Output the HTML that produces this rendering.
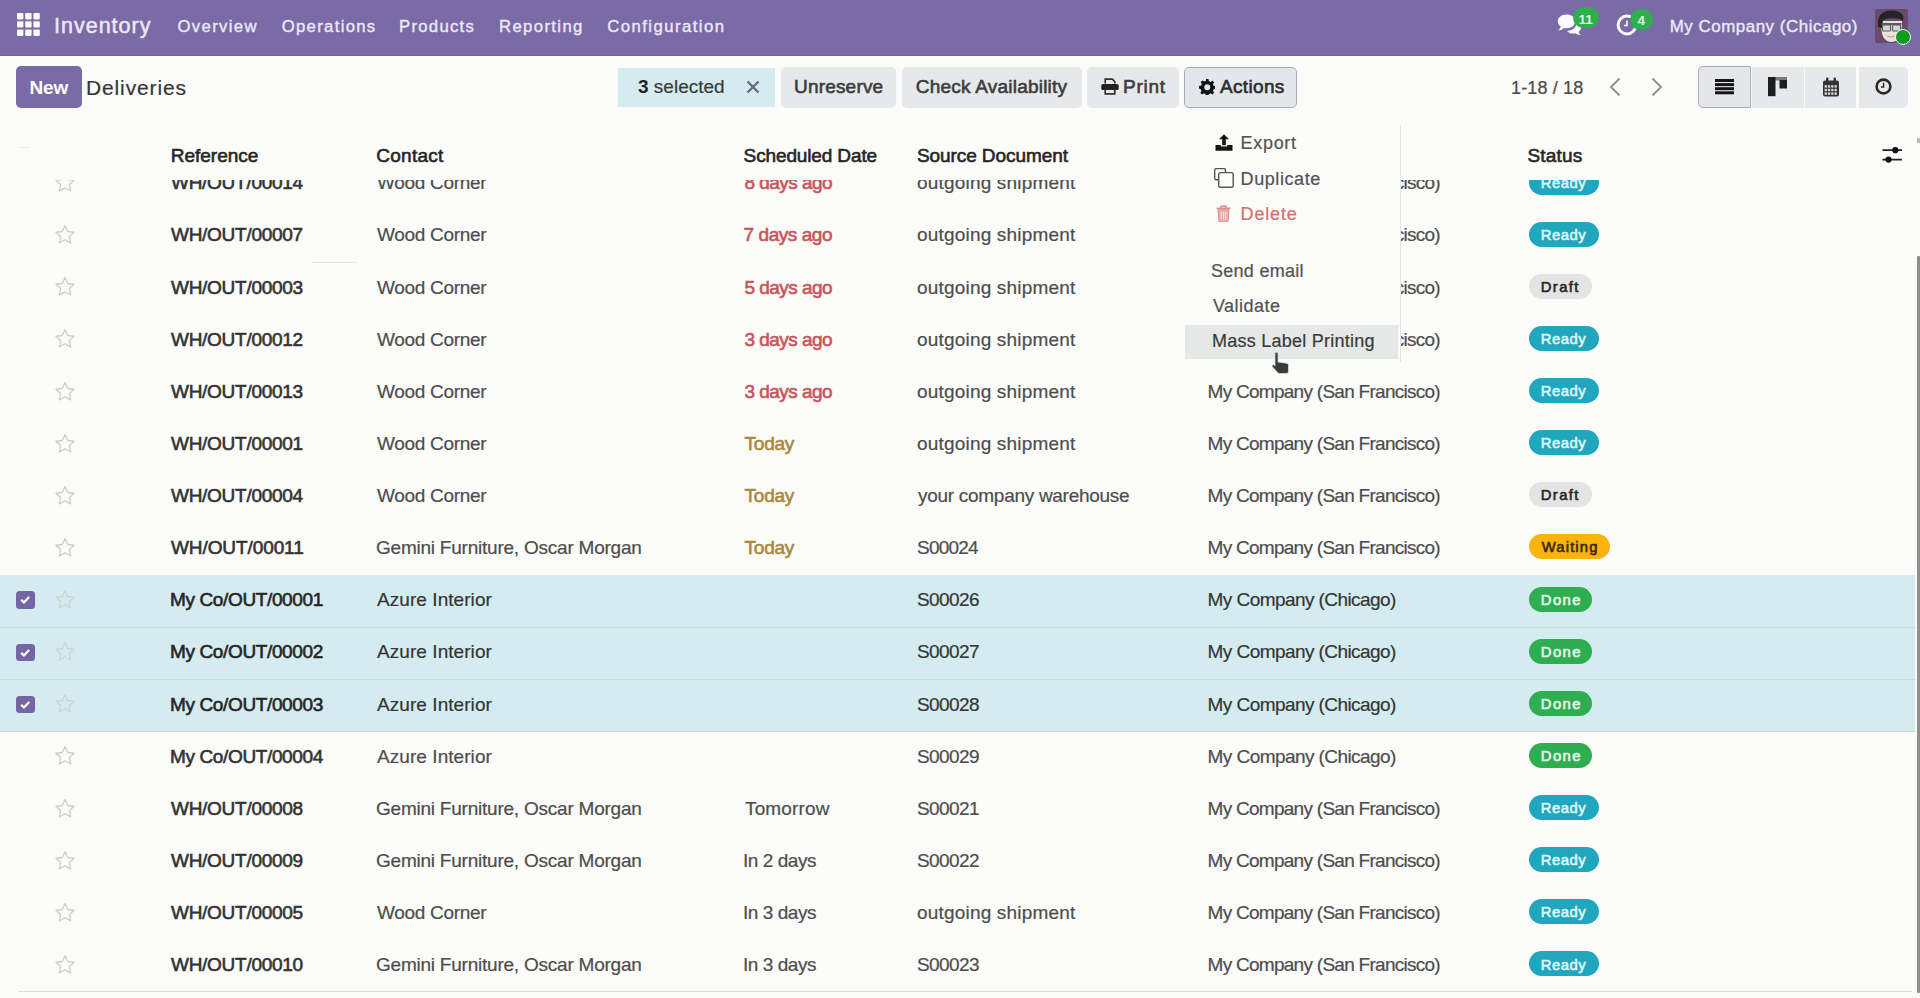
<!DOCTYPE html>
<html><head><meta charset="utf-8"><title>Deliveries - Inventory</title>
<style>
html,body{margin:0;padding:0;}
body{width:1920px;height:998px;position:relative;overflow:hidden;background:#fbfbf9;font-family:"Liberation Sans", sans-serif;}
.t{position:absolute;white-space:nowrap;line-height:24px;}
.t b{font-weight:700}
</style></head><body>
<div style="position:absolute;left:0.00px;top:0.00px;width:1920.00px;height:55.50px;z-index:20;background:#7a6aa6;border-bottom:1px solid #6f6095;box-sizing:border-box"></div>
<div style="position:absolute;left:17.30px;top:13.10px;width:23.70px;height:23.90px;z-index:21;"><svg width="24" height="24" style="display:block"><rect x="0.0" y="0.0" width="6.4" height="6.4" rx="0.8" fill="#fbfaff"/><rect x="8.2" y="0.0" width="6.4" height="6.4" rx="0.8" fill="#fbfaff"/><rect x="16.4" y="0.0" width="6.4" height="6.4" rx="0.8" fill="#fbfaff"/><rect x="0.0" y="8.2" width="6.4" height="6.4" rx="0.8" fill="#fbfaff"/><rect x="8.2" y="8.2" width="6.4" height="6.4" rx="0.8" fill="#fbfaff"/><rect x="16.4" y="8.2" width="6.4" height="6.4" rx="0.8" fill="#fbfaff"/><rect x="0.0" y="16.5" width="6.4" height="6.4" rx="0.8" fill="#fbfaff"/><rect x="8.2" y="16.5" width="6.4" height="6.4" rx="0.8" fill="#fbfaff"/><rect x="16.4" y="16.5" width="6.4" height="6.4" rx="0.8" fill="#fbfaff"/></svg></div>
<div style="position:absolute;left:1556.50px;top:13.50px;width:26.50px;height:24.00px;z-index:21;"><svg width="26" height="24" viewBox="0 0 26 24" style="display:block"><path d="M9.5 0.5C4.5 0.5 0.8 3.4 0.8 7.2c0 2.1 1.1 3.9 3 5.2-.3 1.5-1.2 2.8-2.6 3.9 2.4-.1 4.4-1.1 5.8-2.4.8.2 1.6.3 2.5.3 5 0 8.7-3 8.7-7S14.5.5 9.5.5z" fill="#fbfaff"/><path d="M19.5 9.2c-.2 4.3-4.4 7.5-9.6 7.7 1.4 1.6 3.9 2.6 6.6 2.6.8 0 1.5-.1 2.2-.3 1.3 1.1 3 1.8 5 1.9-1.1-.9-1.8-2-2.1-3.2 1.6-1.1 2.6-2.6 2.6-4.3 0-1.8-1.1-3.4-2.7-4.4z" fill="#fbfaff"/></svg></div>
<div style="position:absolute;left:1573.00px;top:7.30px;width:26.40px;height:21.20px;z-index:21;background:#2fae4e;border-radius:11px"></div>
<div style="position:absolute;left:1615.50px;top:14.30px;width:22.00px;height:22.00px;z-index:21;"><svg width="22" height="22" viewBox="0 0 22 22" style="display:block"><circle cx="11" cy="11" r="8.9" fill="none" stroke="#fbfaff" stroke-width="3"/><path d="M11 6.5v5h-3" fill="none" stroke="#fbfaff" stroke-width="1.6"/></svg></div>
<div style="position:absolute;left:1630.20px;top:8.70px;width:22.40px;height:20.90px;z-index:21;background:#2fae4e;border-radius:11px"></div>
<div style="position:absolute;left:1875.00px;top:8.60px;width:33.00px;height:34.00px;z-index:21;"><svg width="33" height="34" viewBox="0 0 33 34" style="display:block"><rect width="33" height="34" rx="2" fill="#6c4a6c"/><path d="M6 12 C6 26 8 32 16 33 C24 33 27 27 27 12z" fill="#ebe2df"/><path d="M3 17 C2 6 8 1 17 1.5 C25 1.5 30 5 28 12 L25 10 C19 8.5 12 9 8 11 L7 19 C5 19 3.5 18 3 17z" fill="#242424"/><rect x="6.5" y="14" width="20" height="2" fill="#5a5a5a"/><rect x="7.5" y="16" width="8" height="6" rx="1" fill="#d6d6d6" stroke="#5d5d5d" stroke-width="1.2"/><rect x="17.5" y="16" width="8" height="6" rx="1" fill="#d6d6d6" stroke="#5d5d5d" stroke-width="1.2"/><path d="M12 27 q4 2 8 0" fill="none" stroke="#b89a8c" stroke-width="1"/></svg></div>
<div style="position:absolute;left:1894.50px;top:28.50px;width:16.50px;height:16.50px;z-index:22;background:#0a9c1c;border-radius:50%;border:1.8px solid #f0fff0;box-sizing:border-box"></div>
<div style="position:absolute;left:16.00px;top:66.00px;width:66.00px;height:42.00px;z-index:6;background:#7a6aa6;border-radius:5px"></div>
<div style="position:absolute;left:618.00px;top:67.50px;width:157.00px;height:39.50px;z-index:6;background:#d4ecef"></div>
<div style="position:absolute;left:745.50px;top:80.00px;width:14.00px;height:14.00px;z-index:7;"><svg width="14" height="14" viewBox="0 0 14 14" style="display:block"><path d="M1.5 1.5L12.5 12.5M12.5 1.5L1.5 12.5" stroke="#6b6883" stroke-width="2.4"/></svg></div>
<div style="position:absolute;left:781.00px;top:67.00px;width:115.00px;height:40.60px;z-index:6;background:#e6e8e9;border-radius:5px"></div>
<div style="position:absolute;left:902.00px;top:67.00px;width:180.00px;height:40.60px;z-index:6;background:#e6e8e9;border-radius:5px"></div>
<div style="position:absolute;left:1087.00px;top:67.00px;width:92.00px;height:40.60px;z-index:6;background:#e6e8e9;border-radius:5px"></div>
<div style="position:absolute;left:1184.40px;top:66.60px;width:112.60px;height:41.40px;z-index:6;background:#e3e7ec;border:1.5px solid #a9aabd;border-radius:5px;box-sizing:border-box"></div>
<div style="position:absolute;left:1100.75px;top:78.40px;width:18.00px;height:17.00px;z-index:7;"><svg width="18" height="17" viewBox="0 0 18 17" style="display:block"><path d="M4.2 5.5V1.2h7.2l2.4 2.4v1.9" fill="none" stroke="#333" stroke-width="1.7"/><rect x="0.3" y="6" width="17.4" height="6" rx="1.6" fill="#222"/><path d="M4.2 11v4.8h9.6V11" fill="none" stroke="#333" stroke-width="1.7"/></svg></div>
<div style="position:absolute;left:1198.60px;top:78.80px;width:16.50px;height:16.50px;z-index:7;"><svg width="16.5" height="16.5" viewBox="0 0 24 24" style="display:block"><path fill="#111" fill-rule="evenodd" d="M10.2 0h3.6l.6 3.1c.9.3 1.7.6 2.4 1.1l2.7-1.8 2.5 2.5-1.8 2.7c.5.8.9 1.6 1.1 2.5l3.1.6v3.6l-3.1.6c-.3.9-.6 1.7-1.1 2.4l1.8 2.7-2.5 2.5-2.7-1.8c-.8.5-1.6.9-2.5 1.1l-.6 3.1h-3.6l-.6-3.1c-.9-.3-1.7-.6-2.4-1.1l-2.7 1.8-2.5-2.5 1.8-2.7c-.5-.8-.9-1.6-1.1-2.5L0 13.8v-3.6l3.1-.6c.3-.9.6-1.7 1.1-2.4L2.4 4.5 4.9 2l2.7 1.8c.8-.5 1.6-.9 2.5-1.1zM12 7.6a4.4 4.4 0 1 0 0 8.8 4.4 4.4 0 0 0 0-8.8z"/></svg></div>
<div style="position:absolute;left:1607.50px;top:77.30px;width:14.00px;height:20.00px;z-index:7;"><svg width="14" height="20" viewBox="0 0 14 20" style="display:block"><path d="M11.5 1.5L3 10l8.5 8.5" fill="none" stroke="#8f8f8f" stroke-width="1.8"/></svg></div>
<div style="position:absolute;left:1650.00px;top:77.30px;width:14.00px;height:20.00px;z-index:7;"><svg width="14" height="20" viewBox="0 0 14 20" style="display:block"><path d="M2.5 1.5L11 10l-8.5 8.5" fill="none" stroke="#8f8f8f" stroke-width="1.8"/></svg></div>
<div style="position:absolute;left:1698.00px;top:66.40px;width:52.50px;height:41.60px;z-index:6;background:#e4e6ea;border:1.5px solid #a9a9b8;border-radius:5px 0 0 5px;box-sizing:border-box"></div>
<div style="position:absolute;left:1752.00px;top:66.60px;width:51.70px;height:41.10px;z-index:6;background:#e6e8e9"></div>
<div style="position:absolute;left:1805.00px;top:66.60px;width:51.00px;height:41.10px;z-index:6;background:#e6e8e9"></div>
<div style="position:absolute;left:1858.60px;top:66.60px;width:49.80px;height:41.10px;z-index:6;background:#e6e8e9;border-radius:0 5px 5px 0"></div>
<div style="position:absolute;left:1715.30px;top:78.70px;width:19.00px;height:16.00px;z-index:7;"><svg width="19" height="16" style="display:block"><rect y="0" width="19" height="3" fill="#151515"/><rect y="4.1" width="19" height="3" fill="#151515"/><rect y="8.2" width="19" height="3" fill="#151515"/><rect y="12.3" width="19" height="3" fill="#151515"/></svg></div>
<div style="position:absolute;left:1768.40px;top:77.00px;width:19.00px;height:20.00px;z-index:7;"><svg width="19" height="20" style="display:block"><rect x="0" y="0" width="19" height="3.5" fill="#7a7a7a"/><rect x="0" y="0" width="7.5" height="19.2" fill="#1e1e1e"/><rect x="11.5" y="3" width="7.5" height="8.5" fill="#1e1e1e"/></svg></div>
<div style="position:absolute;left:1822.00px;top:76.50px;width:18.00px;height:20.00px;z-index:7;"><svg width="18" height="20" viewBox="0 0 18 20" style="display:block"><path d="M1 5.5a2 2 0 0 1 2-2h12a2 2 0 0 1 2 2V17.5a2 2 0 0 1-2 2H3a2 2 0 0 1-2-2z" fill="#333"/><rect x="4" y="0.5" width="2.4" height="5" rx="1" fill="#333"/><rect x="11.6" y="0.5" width="2.4" height="5" rx="1" fill="#333"/><rect x="2.6" y="8.2" width="2.3" height="2.4" fill="#d8dadc"/><rect x="5.9" y="8.2" width="2.3" height="2.4" fill="#d8dadc"/><rect x="9.2" y="8.2" width="2.3" height="2.4" fill="#d8dadc"/><rect x="12.5" y="8.2" width="2.3" height="2.4" fill="#d8dadc"/><rect x="2.6" y="11.8" width="2.3" height="2.4" fill="#d8dadc"/><rect x="5.9" y="11.8" width="2.3" height="2.4" fill="#d8dadc"/><rect x="9.2" y="11.8" width="2.3" height="2.4" fill="#d8dadc"/><rect x="12.5" y="11.8" width="2.3" height="2.4" fill="#d8dadc"/><rect x="2.6" y="15.4" width="2.3" height="2.4" fill="#d8dadc"/><rect x="5.9" y="15.4" width="2.3" height="2.4" fill="#d8dadc"/><rect x="9.2" y="15.4" width="2.3" height="2.4" fill="#d8dadc"/><rect x="12.5" y="15.4" width="2.3" height="2.4" fill="#d8dadc"/></svg></div>
<div style="position:absolute;left:1875.30px;top:78.30px;width:17.00px;height:17.00px;z-index:7;"><svg width="17" height="17" viewBox="0 0 17 17" style="display:block"><circle cx="8.5" cy="8.5" r="6.9" fill="none" stroke="#2a2a2a" stroke-width="2.6"/><path d="M8.6 4.8v4.2H6" fill="none" stroke="#2a2a2a" stroke-width="1.4"/></svg></div>
<div style="position:absolute;left:1881.50px;top:147.00px;width:22.00px;height:16.00px;z-index:6;"><svg width="22" height="16" viewBox="0 0 22 16" style="display:block"><path d="M0.5 3.2h19.5M0.5 12.6h19.5" stroke="#222" stroke-width="1.8"/><circle cx="13.3" cy="3.2" r="3.1" fill="#111"/><circle cx="6.5" cy="12.6" r="3.1" fill="#111"/></svg></div>
<div style="position:absolute;left:18.50px;top:146.50px;width:11.00px;height:1.00px;z-index:6;background:#ebebeb"></div>
<div style="position:absolute;left:0.00px;top:575.04px;width:1914.50px;height:52.13px;z-index:1;background:#d4ecef"></div>
<div style="position:absolute;left:0.00px;top:627.17px;width:1914.50px;height:52.13px;z-index:1;background:#d4ecef"></div>
<div style="position:absolute;left:0.00px;top:679.30px;width:1914.50px;height:52.13px;z-index:1;background:#d4ecef"></div>
<div style="position:absolute;left:0.00px;top:626.57px;width:1914.50px;height:1.50px;z-index:2;background:#cfd4d4"></div>
<div style="position:absolute;left:0.00px;top:678.70px;width:1914.50px;height:1.50px;z-index:2;background:#cfd4d4"></div>
<div style="position:absolute;left:0.00px;top:730.83px;width:1914.50px;height:1.50px;z-index:2;background:#cfd4d4"></div>
<div style="position:absolute;left:18.00px;top:991.00px;width:1894.00px;height:1.30px;z-index:2;background:#dddddd"></div>
<div style="position:absolute;left:311.80px;top:261.80px;width:45.20px;height:1.00px;z-index:2;background:#e6e6e6"></div>
<div style="position:absolute;left:54.00px;top:172.00px;width:22.00px;height:20.00px;z-index:3;"><svg width="22" height="20" viewBox="0 0 22 20" style="display:block"><path d="M11 1.6l2.75 5.9 6.35.75-4.7 4.35 1.25 6.3L11 15.75 5.35 18.9l1.25-6.3L1.9 8.25l6.35-.75z" fill="none" stroke="#cdcdcd" stroke-width="1.3" stroke-linejoin="round"/></svg></div>
<div style="position:absolute;left:1528.50px;top:169.50px;width:70.50px;height:25.00px;z-index:3;background:#20a7bd;border-radius:12.5px"></div>
<div style="position:absolute;left:54.00px;top:224.13px;width:22.00px;height:20.00px;z-index:3;"><svg width="22" height="20" viewBox="0 0 22 20" style="display:block"><path d="M11 1.6l2.75 5.9 6.35.75-4.7 4.35 1.25 6.3L11 15.75 5.35 18.9l1.25-6.3L1.9 8.25l6.35-.75z" fill="none" stroke="#cdcdcd" stroke-width="1.3" stroke-linejoin="round"/></svg></div>
<div style="position:absolute;left:1528.50px;top:221.63px;width:70.50px;height:25.00px;z-index:3;background:#20a7bd;border-radius:12.5px"></div>
<div style="position:absolute;left:54.00px;top:276.26px;width:22.00px;height:20.00px;z-index:3;"><svg width="22" height="20" viewBox="0 0 22 20" style="display:block"><path d="M11 1.6l2.75 5.9 6.35.75-4.7 4.35 1.25 6.3L11 15.75 5.35 18.9l1.25-6.3L1.9 8.25l6.35-.75z" fill="none" stroke="#cdcdcd" stroke-width="1.3" stroke-linejoin="round"/></svg></div>
<div style="position:absolute;left:1528.50px;top:273.76px;width:63.00px;height:25.00px;z-index:3;background:#e4e4e4;border-radius:12.5px"></div>
<div style="position:absolute;left:54.00px;top:328.39px;width:22.00px;height:20.00px;z-index:3;"><svg width="22" height="20" viewBox="0 0 22 20" style="display:block"><path d="M11 1.6l2.75 5.9 6.35.75-4.7 4.35 1.25 6.3L11 15.75 5.35 18.9l1.25-6.3L1.9 8.25l6.35-.75z" fill="none" stroke="#cdcdcd" stroke-width="1.3" stroke-linejoin="round"/></svg></div>
<div style="position:absolute;left:1528.50px;top:325.89px;width:70.50px;height:25.00px;z-index:3;background:#20a7bd;border-radius:12.5px"></div>
<div style="position:absolute;left:54.00px;top:380.52px;width:22.00px;height:20.00px;z-index:3;"><svg width="22" height="20" viewBox="0 0 22 20" style="display:block"><path d="M11 1.6l2.75 5.9 6.35.75-4.7 4.35 1.25 6.3L11 15.75 5.35 18.9l1.25-6.3L1.9 8.25l6.35-.75z" fill="none" stroke="#cdcdcd" stroke-width="1.3" stroke-linejoin="round"/></svg></div>
<div style="position:absolute;left:1528.50px;top:378.02px;width:70.50px;height:25.00px;z-index:3;background:#20a7bd;border-radius:12.5px"></div>
<div style="position:absolute;left:54.00px;top:432.65px;width:22.00px;height:20.00px;z-index:3;"><svg width="22" height="20" viewBox="0 0 22 20" style="display:block"><path d="M11 1.6l2.75 5.9 6.35.75-4.7 4.35 1.25 6.3L11 15.75 5.35 18.9l1.25-6.3L1.9 8.25l6.35-.75z" fill="none" stroke="#cdcdcd" stroke-width="1.3" stroke-linejoin="round"/></svg></div>
<div style="position:absolute;left:1528.50px;top:430.15px;width:70.50px;height:25.00px;z-index:3;background:#20a7bd;border-radius:12.5px"></div>
<div style="position:absolute;left:54.00px;top:484.78px;width:22.00px;height:20.00px;z-index:3;"><svg width="22" height="20" viewBox="0 0 22 20" style="display:block"><path d="M11 1.6l2.75 5.9 6.35.75-4.7 4.35 1.25 6.3L11 15.75 5.35 18.9l1.25-6.3L1.9 8.25l6.35-.75z" fill="none" stroke="#cdcdcd" stroke-width="1.3" stroke-linejoin="round"/></svg></div>
<div style="position:absolute;left:1528.50px;top:482.28px;width:63.00px;height:25.00px;z-index:3;background:#e4e4e4;border-radius:12.5px"></div>
<div style="position:absolute;left:54.00px;top:536.91px;width:22.00px;height:20.00px;z-index:3;"><svg width="22" height="20" viewBox="0 0 22 20" style="display:block"><path d="M11 1.6l2.75 5.9 6.35.75-4.7 4.35 1.25 6.3L11 15.75 5.35 18.9l1.25-6.3L1.9 8.25l6.35-.75z" fill="none" stroke="#cdcdcd" stroke-width="1.3" stroke-linejoin="round"/></svg></div>
<div style="position:absolute;left:1528.50px;top:534.41px;width:81.00px;height:25.00px;z-index:3;background:#fbb30d;border-radius:12.5px"></div>
<div style="position:absolute;left:54.00px;top:589.04px;width:22.00px;height:20.00px;z-index:3;"><svg width="22" height="20" viewBox="0 0 22 20" style="display:block"><path d="M11 1.6l2.75 5.9 6.35.75-4.7 4.35 1.25 6.3L11 15.75 5.35 18.9l1.25-6.3L1.9 8.25l6.35-.75z" fill="none" stroke="#d0d4d4" stroke-width="1.3" stroke-linejoin="round"/></svg></div>
<div style="position:absolute;left:16.00px;top:591.44px;width:18.50px;height:17.30px;z-index:3;background:#7466a5;border-radius:3.5px"><svg width="18.5" height="17.3" viewBox="0 0 18.5 17.3" style="display:block"><path d="M5.2 8.8l2.7 2.7 5.3-5.6" fill="none" stroke="#fff" stroke-width="2.2"/></svg></div>
<div style="position:absolute;left:1528.50px;top:586.54px;width:63.80px;height:25.00px;z-index:3;background:#2eae50;border-radius:12.5px"></div>
<div style="position:absolute;left:54.00px;top:641.17px;width:22.00px;height:20.00px;z-index:3;"><svg width="22" height="20" viewBox="0 0 22 20" style="display:block"><path d="M11 1.6l2.75 5.9 6.35.75-4.7 4.35 1.25 6.3L11 15.75 5.35 18.9l1.25-6.3L1.9 8.25l6.35-.75z" fill="none" stroke="#d0d4d4" stroke-width="1.3" stroke-linejoin="round"/></svg></div>
<div style="position:absolute;left:16.00px;top:643.57px;width:18.50px;height:17.30px;z-index:3;background:#7466a5;border-radius:3.5px"><svg width="18.5" height="17.3" viewBox="0 0 18.5 17.3" style="display:block"><path d="M5.2 8.8l2.7 2.7 5.3-5.6" fill="none" stroke="#fff" stroke-width="2.2"/></svg></div>
<div style="position:absolute;left:1528.50px;top:638.67px;width:63.80px;height:25.00px;z-index:3;background:#2eae50;border-radius:12.5px"></div>
<div style="position:absolute;left:54.00px;top:693.30px;width:22.00px;height:20.00px;z-index:3;"><svg width="22" height="20" viewBox="0 0 22 20" style="display:block"><path d="M11 1.6l2.75 5.9 6.35.75-4.7 4.35 1.25 6.3L11 15.75 5.35 18.9l1.25-6.3L1.9 8.25l6.35-.75z" fill="none" stroke="#d0d4d4" stroke-width="1.3" stroke-linejoin="round"/></svg></div>
<div style="position:absolute;left:16.00px;top:695.70px;width:18.50px;height:17.30px;z-index:3;background:#7466a5;border-radius:3.5px"><svg width="18.5" height="17.3" viewBox="0 0 18.5 17.3" style="display:block"><path d="M5.2 8.8l2.7 2.7 5.3-5.6" fill="none" stroke="#fff" stroke-width="2.2"/></svg></div>
<div style="position:absolute;left:1528.50px;top:690.80px;width:63.80px;height:25.00px;z-index:3;background:#2eae50;border-radius:12.5px"></div>
<div style="position:absolute;left:54.00px;top:745.43px;width:22.00px;height:20.00px;z-index:3;"><svg width="22" height="20" viewBox="0 0 22 20" style="display:block"><path d="M11 1.6l2.75 5.9 6.35.75-4.7 4.35 1.25 6.3L11 15.75 5.35 18.9l1.25-6.3L1.9 8.25l6.35-.75z" fill="none" stroke="#cdcdcd" stroke-width="1.3" stroke-linejoin="round"/></svg></div>
<div style="position:absolute;left:1528.50px;top:742.93px;width:63.80px;height:25.00px;z-index:3;background:#2eae50;border-radius:12.5px"></div>
<div style="position:absolute;left:54.00px;top:797.56px;width:22.00px;height:20.00px;z-index:3;"><svg width="22" height="20" viewBox="0 0 22 20" style="display:block"><path d="M11 1.6l2.75 5.9 6.35.75-4.7 4.35 1.25 6.3L11 15.75 5.35 18.9l1.25-6.3L1.9 8.25l6.35-.75z" fill="none" stroke="#cdcdcd" stroke-width="1.3" stroke-linejoin="round"/></svg></div>
<div style="position:absolute;left:1528.50px;top:795.06px;width:70.50px;height:25.00px;z-index:3;background:#20a7bd;border-radius:12.5px"></div>
<div style="position:absolute;left:54.00px;top:849.69px;width:22.00px;height:20.00px;z-index:3;"><svg width="22" height="20" viewBox="0 0 22 20" style="display:block"><path d="M11 1.6l2.75 5.9 6.35.75-4.7 4.35 1.25 6.3L11 15.75 5.35 18.9l1.25-6.3L1.9 8.25l6.35-.75z" fill="none" stroke="#cdcdcd" stroke-width="1.3" stroke-linejoin="round"/></svg></div>
<div style="position:absolute;left:1528.50px;top:847.19px;width:70.50px;height:25.00px;z-index:3;background:#20a7bd;border-radius:12.5px"></div>
<div style="position:absolute;left:54.00px;top:901.82px;width:22.00px;height:20.00px;z-index:3;"><svg width="22" height="20" viewBox="0 0 22 20" style="display:block"><path d="M11 1.6l2.75 5.9 6.35.75-4.7 4.35 1.25 6.3L11 15.75 5.35 18.9l1.25-6.3L1.9 8.25l6.35-.75z" fill="none" stroke="#cdcdcd" stroke-width="1.3" stroke-linejoin="round"/></svg></div>
<div style="position:absolute;left:1528.50px;top:899.32px;width:70.50px;height:25.00px;z-index:3;background:#20a7bd;border-radius:12.5px"></div>
<div style="position:absolute;left:54.00px;top:953.95px;width:22.00px;height:20.00px;z-index:3;"><svg width="22" height="20" viewBox="0 0 22 20" style="display:block"><path d="M11 1.6l2.75 5.9 6.35.75-4.7 4.35 1.25 6.3L11 15.75 5.35 18.9l1.25-6.3L1.9 8.25l6.35-.75z" fill="none" stroke="#cdcdcd" stroke-width="1.3" stroke-linejoin="round"/></svg></div>
<div style="position:absolute;left:1528.50px;top:951.45px;width:70.50px;height:25.00px;z-index:3;background:#20a7bd;border-radius:12.5px"></div>
<div style="position:absolute;left:0.00px;top:55.50px;width:1920.00px;height:124.50px;z-index:5;background:#fbfbf9"></div>
<div style="position:absolute;left:1185.00px;top:125.00px;width:215.80px;height:237.00px;z-index:10;background:#fbfbf9;border-right:1px solid #e4e4e4;box-sizing:border-box"></div>
<div style="position:absolute;left:1185.30px;top:325.00px;width:212.50px;height:33.80px;z-index:11;background:#e6e8e8"></div>
<div style="position:absolute;left:1215.00px;top:134.00px;width:18.00px;height:17.00px;z-index:12;"><svg width="18" height="17" viewBox="0 0 18 17" style="display:block"><path d="M9 0.3l5 5h-3.2v6H7.2v-6H4z" fill="#151515"/><path d="M0.5 11h5.3v1.5h6.4V11h5.3v5.8H0.5z" fill="#151515"/></svg></div>
<div style="position:absolute;left:1214.00px;top:168.30px;width:20.00px;height:20.00px;z-index:12;"><svg width="20" height="20" viewBox="0 0 20 20" style="display:block"><path d="M11.5 4.5V2.2a1.6 1.6 0 0 0-1.6-1.6H2.3A1.6 1.6 0 0 0 .7 2.2v8a1.6 1.6 0 0 0 1.6 1.6h2.2" fill="none" stroke="#555" stroke-width="1.4"/><rect x="4.7" y="4.6" width="14.5" height="14.6" rx="1.8" fill="none" stroke="#555" stroke-width="1.4"/></svg></div>
<div style="position:absolute;left:1216.30px;top:205.30px;width:15.00px;height:17.00px;z-index:12;"><svg width="15" height="17" viewBox="0 0 15 17" style="display:block"><path d="M0.5 3.3h14M5 3.3V1.2h5v2.1" fill="none" stroke="#e08d8d" stroke-width="1.5"/><path d="M2 4.2h11l-.9 11.8a1 1 0 0 1-1 .9H3.9a1 1 0 0 1-1-.9z" fill="#eab0b0" stroke="#e08d8d" stroke-width="1"/><path d="M5.3 7v7M7.5 7v7M9.7 7v7" stroke="#f6dede" stroke-width="1"/></svg></div>
<div style="position:absolute;left:1270.50px;top:350.50px;width:22.00px;height:26.00px;z-index:30;"><svg width="22" height="26" viewBox="0 0 22 26" style="display:block"><path d="M5.5 1.3c.9 0 1.5.6 1.5 1.5v8.2l8.3 1.2c1.5.3 2.2 1 2.2 2.4v5.6c0 1.4-.9 2.3-2.3 2.3H8.6c-.9 0-1.5-.4-2-1L1.4 15.8c-.6-.8-.3-1.7.6-2 .6-.2 1.3 0 1.8.5L4 15V2.8c0-.9.6-1.5 1.5-1.5z" fill="#3a3a3a" stroke="#d8dcdc" stroke-width="0.8"/></svg></div>
<div style="position:absolute;left:1917.20px;top:256.00px;width:2.80px;height:737.00px;z-index:30;background:#8e8e8e;border-radius:1px"></div>
<div style="position:absolute;left:1917.00px;top:138.00px;width:3.00px;height:5.00px;z-index:30;background:#bbbbbb"></div>
<div id="t0" class="t" style="left:54.00px;top:14.15px;font-size:21.5px;font-weight:400;color:#ece8f6;letter-spacing:1.000px;z-index:25;-webkit-text-stroke:0.5px #ece8f6">Inventory</div>
<div id="t1" class="t" style="left:177.50px;top:14.51px;font-size:16.7px;font-weight:400;color:#ece8f6;letter-spacing:1.343px;z-index:25;-webkit-text-stroke:0.4px #ece8f6">Overview</div>
<div id="t2" class="t" style="left:281.70px;top:14.51px;font-size:16.7px;font-weight:400;color:#ece8f6;letter-spacing:1.322px;z-index:25;-webkit-text-stroke:0.4px #ece8f6">Operations</div>
<div id="t3" class="t" style="left:399.00px;top:14.51px;font-size:16.7px;font-weight:400;color:#ece8f6;letter-spacing:1.286px;z-index:25;-webkit-text-stroke:0.4px #ece8f6">Products</div>
<div id="t4" class="t" style="left:499.00px;top:14.51px;font-size:16.7px;font-weight:400;color:#ece8f6;letter-spacing:1.375px;z-index:25;-webkit-text-stroke:0.4px #ece8f6">Reporting</div>
<div id="t5" class="t" style="left:607.30px;top:14.51px;font-size:16.7px;font-weight:400;color:#ece8f6;letter-spacing:1.450px;z-index:25;-webkit-text-stroke:0.4px #ece8f6">Configuration</div>
<div id="t6" class="t" style="left:1669.70px;top:14.64px;font-size:16.9px;font-weight:400;color:#ece8f6;letter-spacing:0.542px;z-index:25;-webkit-text-stroke:0.4px #ece8f6">My Company (Chicago)</div>
<div id="t7" class="t" style="left:29.60px;top:75.92px;font-size:19px;font-weight:700;color:#ffffff;letter-spacing:-0.250px;z-index:7">New</div>
<div id="t8" class="t" style="left:86.00px;top:76.22px;font-size:21px;font-weight:400;color:#363636;letter-spacing:0.867px;z-index:7;-webkit-text-stroke:0.2px #363636">Deliveries</div>
<div id="t9" class="t" style="left:638.00px;top:75.22px;font-size:19px;font-weight:400;color:#3a3a3a;letter-spacing:0.000px;z-index:7;-webkit-text-stroke:0.2px #3a3a3a"><b style="-webkit-text-stroke:0;color:#1e1e1e">3</b> selected</div>
<div id="t10" class="t" style="left:794.00px;top:75.22px;font-size:19px;font-weight:400;color:#3a3d40;letter-spacing:0.188px;z-index:7;-webkit-text-stroke:0.6px #3a3d40">Unreserve</div>
<div id="t11" class="t" style="left:915.70px;top:75.22px;font-size:19px;font-weight:400;color:#3a3d40;letter-spacing:0.229px;z-index:7;-webkit-text-stroke:0.6px #3a3d40">Check Availability</div>
<div id="t12" class="t" style="left:1123.00px;top:75.22px;font-size:19px;font-weight:400;color:#3a3d40;letter-spacing:0.750px;z-index:7;-webkit-text-stroke:0.6px #3a3d40">Print</div>
<div id="t13" class="t" style="left:1220.00px;top:75.22px;font-size:19px;font-weight:400;color:#2a2d30;letter-spacing:0.333px;z-index:7;-webkit-text-stroke:0.6px #2a2d30">Actions</div>
<div id="t14" class="t" style="left:1511.00px;top:75.56px;font-size:18px;font-weight:400;color:#4a4a4a;letter-spacing:0.138px;z-index:7;-webkit-text-stroke:0.2px #4a4a4a">1-18 / 18</div>
<div id="t15" class="t" style="left:170.70px;top:143.52px;font-size:19px;font-weight:400;color:#262626;letter-spacing:0.000px;z-index:7;-webkit-text-stroke:0.6px #262626">Reference</div>
<div id="t16" class="t" style="left:376.25px;top:143.52px;font-size:19px;font-weight:400;color:#262626;letter-spacing:0.267px;z-index:7;-webkit-text-stroke:0.6px #262626">Contact</div>
<div id="t17" class="t" style="left:743.60px;top:143.52px;font-size:19px;font-weight:400;color:#262626;letter-spacing:-0.131px;z-index:7;-webkit-text-stroke:0.6px #262626">Scheduled Date</div>
<div id="t18" class="t" style="left:916.90px;top:143.52px;font-size:19px;font-weight:400;color:#262626;letter-spacing:-0.071px;z-index:7;-webkit-text-stroke:0.6px #262626">Source Document</div>
<div id="t19" class="t" style="left:1527.50px;top:143.52px;font-size:19px;font-weight:400;color:#262626;letter-spacing:0.160px;z-index:7;-webkit-text-stroke:0.6px #262626">Status</div>
<div id="t20" class="t" style="left:171.00px;top:171.32px;font-size:19px;font-weight:400;color:#333333;letter-spacing:-0.273px;z-index:3;-webkit-text-stroke:0.6px #333333">WH/OUT/00014</div>
<div id="t21" class="t" style="left:377.00px;top:171.32px;font-size:19px;font-weight:400;color:#4d4d4d;letter-spacing:-0.310px;z-index:3;-webkit-text-stroke:0.2px #4d4d4d">Wood Corner</div>
<div id="t22" class="t" style="left:744.60px;top:171.32px;font-size:19px;font-weight:400;color:#c95459;letter-spacing:-0.556px;z-index:3;-webkit-text-stroke:0.6px #c95459">8 days ago</div>
<div id="t23" class="t" style="left:917.00px;top:171.32px;font-size:19px;font-weight:400;color:#4d4d4d;letter-spacing:0.188px;z-index:3;-webkit-text-stroke:0.2px #4d4d4d">outgoing shipment</div>
<div id="t24" class="t" style="left:1207.60px;top:171.32px;font-size:19px;font-weight:400;color:#4d4d4d;letter-spacing:-0.728px;z-index:3;-webkit-text-stroke:0.2px #4d4d4d">My Company (San Francisco)</div>
<div id="t25" class="t" style="left:1540.80px;top:170.57px;font-size:14.8px;font-weight:400;color:#dff7fb;letter-spacing:0.500px;z-index:4;-webkit-text-stroke:0.6px #dff7fb">Ready</div>
<div id="t26" class="t" style="left:171.00px;top:223.45px;font-size:19px;font-weight:400;color:#333333;letter-spacing:-0.273px;z-index:3;-webkit-text-stroke:0.6px #333333">WH/OUT/00007</div>
<div id="t27" class="t" style="left:377.00px;top:223.45px;font-size:19px;font-weight:400;color:#4d4d4d;letter-spacing:-0.310px;z-index:3;-webkit-text-stroke:0.2px #4d4d4d">Wood Corner</div>
<div id="t28" class="t" style="left:743.60px;top:223.45px;font-size:19px;font-weight:400;color:#c95459;letter-spacing:-0.444px;z-index:3;-webkit-text-stroke:0.6px #c95459">7 days ago</div>
<div id="t29" class="t" style="left:917.00px;top:223.45px;font-size:19px;font-weight:400;color:#4d4d4d;letter-spacing:0.188px;z-index:3;-webkit-text-stroke:0.2px #4d4d4d">outgoing shipment</div>
<div id="t30" class="t" style="left:1207.60px;top:223.45px;font-size:19px;font-weight:400;color:#4d4d4d;letter-spacing:-0.728px;z-index:3;-webkit-text-stroke:0.2px #4d4d4d">My Company (San Francisco)</div>
<div id="t31" class="t" style="left:1540.80px;top:222.70px;font-size:14.8px;font-weight:400;color:#dff7fb;letter-spacing:0.500px;z-index:4;-webkit-text-stroke:0.6px #dff7fb">Ready</div>
<div id="t32" class="t" style="left:171.00px;top:275.58px;font-size:19px;font-weight:400;color:#333333;letter-spacing:-0.273px;z-index:3;-webkit-text-stroke:0.6px #333333">WH/OUT/00003</div>
<div id="t33" class="t" style="left:377.00px;top:275.58px;font-size:19px;font-weight:400;color:#4d4d4d;letter-spacing:-0.310px;z-index:3;-webkit-text-stroke:0.2px #4d4d4d">Wood Corner</div>
<div id="t34" class="t" style="left:744.60px;top:275.58px;font-size:19px;font-weight:400;color:#c95459;letter-spacing:-0.556px;z-index:3;-webkit-text-stroke:0.6px #c95459">5 days ago</div>
<div id="t35" class="t" style="left:917.00px;top:275.58px;font-size:19px;font-weight:400;color:#4d4d4d;letter-spacing:0.188px;z-index:3;-webkit-text-stroke:0.2px #4d4d4d">outgoing shipment</div>
<div id="t36" class="t" style="left:1207.60px;top:275.58px;font-size:19px;font-weight:400;color:#4d4d4d;letter-spacing:-0.728px;z-index:3;-webkit-text-stroke:0.2px #4d4d4d">My Company (San Francisco)</div>
<div id="t37" class="t" style="left:1540.80px;top:274.83px;font-size:14.8px;font-weight:400;color:#262626;letter-spacing:1.375px;z-index:4;-webkit-text-stroke:0.6px #262626">Draft</div>
<div id="t38" class="t" style="left:171.00px;top:327.71px;font-size:19px;font-weight:400;color:#333333;letter-spacing:-0.273px;z-index:3;-webkit-text-stroke:0.6px #333333">WH/OUT/00012</div>
<div id="t39" class="t" style="left:377.00px;top:327.71px;font-size:19px;font-weight:400;color:#4d4d4d;letter-spacing:-0.310px;z-index:3;-webkit-text-stroke:0.2px #4d4d4d">Wood Corner</div>
<div id="t40" class="t" style="left:744.60px;top:327.71px;font-size:19px;font-weight:400;color:#c95459;letter-spacing:-0.556px;z-index:3;-webkit-text-stroke:0.6px #c95459">3 days ago</div>
<div id="t41" class="t" style="left:917.00px;top:327.71px;font-size:19px;font-weight:400;color:#4d4d4d;letter-spacing:0.188px;z-index:3;-webkit-text-stroke:0.2px #4d4d4d">outgoing shipment</div>
<div id="t42" class="t" style="left:1207.60px;top:327.71px;font-size:19px;font-weight:400;color:#4d4d4d;letter-spacing:-0.728px;z-index:3;-webkit-text-stroke:0.2px #4d4d4d">My Company (San Francisco)</div>
<div id="t43" class="t" style="left:1540.80px;top:326.96px;font-size:14.8px;font-weight:400;color:#dff7fb;letter-spacing:0.500px;z-index:4;-webkit-text-stroke:0.6px #dff7fb">Ready</div>
<div id="t44" class="t" style="left:171.00px;top:379.84px;font-size:19px;font-weight:400;color:#333333;letter-spacing:-0.273px;z-index:3;-webkit-text-stroke:0.6px #333333">WH/OUT/00013</div>
<div id="t45" class="t" style="left:377.00px;top:379.84px;font-size:19px;font-weight:400;color:#4d4d4d;letter-spacing:-0.310px;z-index:3;-webkit-text-stroke:0.2px #4d4d4d">Wood Corner</div>
<div id="t46" class="t" style="left:744.60px;top:379.84px;font-size:19px;font-weight:400;color:#c95459;letter-spacing:-0.556px;z-index:3;-webkit-text-stroke:0.6px #c95459">3 days ago</div>
<div id="t47" class="t" style="left:917.00px;top:379.84px;font-size:19px;font-weight:400;color:#4d4d4d;letter-spacing:0.188px;z-index:3;-webkit-text-stroke:0.2px #4d4d4d">outgoing shipment</div>
<div id="t48" class="t" style="left:1207.60px;top:379.84px;font-size:19px;font-weight:400;color:#4d4d4d;letter-spacing:-0.728px;z-index:3;-webkit-text-stroke:0.2px #4d4d4d">My Company (San Francisco)</div>
<div id="t49" class="t" style="left:1540.80px;top:379.09px;font-size:14.8px;font-weight:400;color:#dff7fb;letter-spacing:0.500px;z-index:4;-webkit-text-stroke:0.6px #dff7fb">Ready</div>
<div id="t50" class="t" style="left:171.00px;top:431.97px;font-size:19px;font-weight:400;color:#333333;letter-spacing:-0.273px;z-index:3;-webkit-text-stroke:0.6px #333333">WH/OUT/00001</div>
<div id="t51" class="t" style="left:377.00px;top:431.97px;font-size:19px;font-weight:400;color:#4d4d4d;letter-spacing:-0.310px;z-index:3;-webkit-text-stroke:0.2px #4d4d4d">Wood Corner</div>
<div id="t52" class="t" style="left:744.60px;top:431.97px;font-size:19px;font-weight:400;color:#a8893e;letter-spacing:-0.250px;z-index:3;-webkit-text-stroke:0.6px #a8893e">Today</div>
<div id="t53" class="t" style="left:917.00px;top:431.97px;font-size:19px;font-weight:400;color:#4d4d4d;letter-spacing:0.188px;z-index:3;-webkit-text-stroke:0.2px #4d4d4d">outgoing shipment</div>
<div id="t54" class="t" style="left:1207.60px;top:431.97px;font-size:19px;font-weight:400;color:#4d4d4d;letter-spacing:-0.728px;z-index:3;-webkit-text-stroke:0.2px #4d4d4d">My Company (San Francisco)</div>
<div id="t55" class="t" style="left:1540.80px;top:431.22px;font-size:14.8px;font-weight:400;color:#dff7fb;letter-spacing:0.500px;z-index:4;-webkit-text-stroke:0.6px #dff7fb">Ready</div>
<div id="t56" class="t" style="left:171.00px;top:484.10px;font-size:19px;font-weight:400;color:#333333;letter-spacing:-0.273px;z-index:3;-webkit-text-stroke:0.6px #333333">WH/OUT/00004</div>
<div id="t57" class="t" style="left:377.00px;top:484.10px;font-size:19px;font-weight:400;color:#4d4d4d;letter-spacing:-0.310px;z-index:3;-webkit-text-stroke:0.2px #4d4d4d">Wood Corner</div>
<div id="t58" class="t" style="left:744.60px;top:484.10px;font-size:19px;font-weight:400;color:#a8893e;letter-spacing:-0.250px;z-index:3;-webkit-text-stroke:0.6px #a8893e">Today</div>
<div id="t59" class="t" style="left:918.00px;top:484.10px;font-size:19px;font-weight:400;color:#4d4d4d;letter-spacing:-0.286px;z-index:3;-webkit-text-stroke:0.2px #4d4d4d">your company warehouse</div>
<div id="t60" class="t" style="left:1207.60px;top:484.10px;font-size:19px;font-weight:400;color:#4d4d4d;letter-spacing:-0.728px;z-index:3;-webkit-text-stroke:0.2px #4d4d4d">My Company (San Francisco)</div>
<div id="t61" class="t" style="left:1540.80px;top:483.35px;font-size:14.8px;font-weight:400;color:#262626;letter-spacing:1.375px;z-index:4;-webkit-text-stroke:0.6px #262626">Draft</div>
<div id="t62" class="t" style="left:171.00px;top:536.23px;font-size:19px;font-weight:400;color:#333333;letter-spacing:-0.091px;z-index:3;-webkit-text-stroke:0.6px #333333">WH/OUT/00011</div>
<div id="t63" class="t" style="left:376.00px;top:536.23px;font-size:19px;font-weight:400;color:#4d4d4d;letter-spacing:-0.228px;z-index:3;-webkit-text-stroke:0.2px #4d4d4d">Gemini Furniture, Oscar Morgan</div>
<div id="t64" class="t" style="left:744.60px;top:536.23px;font-size:19px;font-weight:400;color:#a8893e;letter-spacing:-0.250px;z-index:3;-webkit-text-stroke:0.6px #a8893e">Today</div>
<div id="t65" class="t" style="left:917.00px;top:536.23px;font-size:19px;font-weight:400;color:#4d4d4d;letter-spacing:-0.780px;z-index:3;-webkit-text-stroke:0.2px #4d4d4d">S00024</div>
<div id="t66" class="t" style="left:1207.60px;top:536.23px;font-size:19px;font-weight:400;color:#4d4d4d;letter-spacing:-0.728px;z-index:3;-webkit-text-stroke:0.2px #4d4d4d">My Company (San Francisco)</div>
<div id="t67" class="t" style="left:1541.80px;top:535.48px;font-size:14.8px;font-weight:400;color:#3a2800;letter-spacing:1.133px;z-index:4;-webkit-text-stroke:0.6px #3a2800">Waiting</div>
<div id="t68" class="t" style="left:170.00px;top:588.36px;font-size:19px;font-weight:400;color:#262626;letter-spacing:-0.364px;z-index:3;-webkit-text-stroke:0.6px #262626">My Co/OUT/00001</div>
<div id="t69" class="t" style="left:377.00px;top:588.36px;font-size:19px;font-weight:400;color:#353535;letter-spacing:0.062px;z-index:3;-webkit-text-stroke:0.2px #353535">Azure Interior</div>
<div id="t70" class="t" style="left:917.00px;top:588.36px;font-size:19px;font-weight:400;color:#353535;letter-spacing:-0.580px;z-index:3;-webkit-text-stroke:0.2px #353535">S00026</div>
<div id="t71" class="t" style="left:1207.60px;top:588.36px;font-size:19px;font-weight:400;color:#353535;letter-spacing:-0.568px;z-index:3;-webkit-text-stroke:0.2px #353535">My Company (Chicago)</div>
<div id="t72" class="t" style="left:1540.80px;top:587.61px;font-size:14.8px;font-weight:400;color:#e6f7ea;letter-spacing:1.400px;z-index:4;-webkit-text-stroke:0.6px #e6f7ea">Done</div>
<div id="t73" class="t" style="left:170.00px;top:640.49px;font-size:19px;font-weight:400;color:#262626;letter-spacing:-0.364px;z-index:3;-webkit-text-stroke:0.6px #262626">My Co/OUT/00002</div>
<div id="t74" class="t" style="left:377.00px;top:640.49px;font-size:19px;font-weight:400;color:#353535;letter-spacing:0.062px;z-index:3;-webkit-text-stroke:0.2px #353535">Azure Interior</div>
<div id="t75" class="t" style="left:917.00px;top:640.49px;font-size:19px;font-weight:400;color:#353535;letter-spacing:-0.580px;z-index:3;-webkit-text-stroke:0.2px #353535">S00027</div>
<div id="t76" class="t" style="left:1207.60px;top:640.49px;font-size:19px;font-weight:400;color:#353535;letter-spacing:-0.568px;z-index:3;-webkit-text-stroke:0.2px #353535">My Company (Chicago)</div>
<div id="t77" class="t" style="left:1540.80px;top:639.74px;font-size:14.8px;font-weight:400;color:#e6f7ea;letter-spacing:1.400px;z-index:4;-webkit-text-stroke:0.6px #e6f7ea">Done</div>
<div id="t78" class="t" style="left:170.00px;top:692.62px;font-size:19px;font-weight:400;color:#262626;letter-spacing:-0.364px;z-index:3;-webkit-text-stroke:0.6px #262626">My Co/OUT/00003</div>
<div id="t79" class="t" style="left:377.00px;top:692.62px;font-size:19px;font-weight:400;color:#353535;letter-spacing:0.062px;z-index:3;-webkit-text-stroke:0.2px #353535">Azure Interior</div>
<div id="t80" class="t" style="left:917.00px;top:692.62px;font-size:19px;font-weight:400;color:#353535;letter-spacing:-0.580px;z-index:3;-webkit-text-stroke:0.2px #353535">S00028</div>
<div id="t81" class="t" style="left:1207.60px;top:692.62px;font-size:19px;font-weight:400;color:#353535;letter-spacing:-0.568px;z-index:3;-webkit-text-stroke:0.2px #353535">My Company (Chicago)</div>
<div id="t82" class="t" style="left:1540.80px;top:691.87px;font-size:14.8px;font-weight:400;color:#e6f7ea;letter-spacing:1.400px;z-index:4;-webkit-text-stroke:0.6px #e6f7ea">Done</div>
<div id="t83" class="t" style="left:170.00px;top:744.75px;font-size:19px;font-weight:400;color:#333333;letter-spacing:-0.364px;z-index:3;-webkit-text-stroke:0.6px #333333">My Co/OUT/00004</div>
<div id="t84" class="t" style="left:377.00px;top:744.75px;font-size:19px;font-weight:400;color:#4d4d4d;letter-spacing:0.062px;z-index:3;-webkit-text-stroke:0.2px #4d4d4d">Azure Interior</div>
<div id="t85" class="t" style="left:917.00px;top:744.75px;font-size:19px;font-weight:400;color:#4d4d4d;letter-spacing:-0.580px;z-index:3;-webkit-text-stroke:0.2px #4d4d4d">S00029</div>
<div id="t86" class="t" style="left:1207.60px;top:744.75px;font-size:19px;font-weight:400;color:#4d4d4d;letter-spacing:-0.568px;z-index:3;-webkit-text-stroke:0.2px #4d4d4d">My Company (Chicago)</div>
<div id="t87" class="t" style="left:1540.80px;top:744.00px;font-size:14.8px;font-weight:400;color:#e6f7ea;letter-spacing:1.400px;z-index:4;-webkit-text-stroke:0.6px #e6f7ea">Done</div>
<div id="t88" class="t" style="left:171.00px;top:796.88px;font-size:19px;font-weight:400;color:#333333;letter-spacing:-0.273px;z-index:3;-webkit-text-stroke:0.6px #333333">WH/OUT/00008</div>
<div id="t89" class="t" style="left:376.00px;top:796.88px;font-size:19px;font-weight:400;color:#4d4d4d;letter-spacing:-0.228px;z-index:3;-webkit-text-stroke:0.2px #4d4d4d">Gemini Furniture, Oscar Morgan</div>
<div id="t90" class="t" style="left:745.00px;top:796.88px;font-size:19px;font-weight:400;color:#4d4d4d;letter-spacing:0.143px;z-index:3;-webkit-text-stroke:0.2px #4d4d4d">Tomorrow</div>
<div id="t91" class="t" style="left:917.00px;top:796.88px;font-size:19px;font-weight:400;color:#4d4d4d;letter-spacing:-0.580px;z-index:3;-webkit-text-stroke:0.2px #4d4d4d">S00021</div>
<div id="t92" class="t" style="left:1207.60px;top:796.88px;font-size:19px;font-weight:400;color:#4d4d4d;letter-spacing:-0.728px;z-index:3;-webkit-text-stroke:0.2px #4d4d4d">My Company (San Francisco)</div>
<div id="t93" class="t" style="left:1540.80px;top:796.13px;font-size:14.8px;font-weight:400;color:#dff7fb;letter-spacing:0.500px;z-index:4;-webkit-text-stroke:0.6px #dff7fb">Ready</div>
<div id="t94" class="t" style="left:171.00px;top:849.01px;font-size:19px;font-weight:400;color:#333333;letter-spacing:-0.273px;z-index:3;-webkit-text-stroke:0.6px #333333">WH/OUT/00009</div>
<div id="t95" class="t" style="left:376.00px;top:849.01px;font-size:19px;font-weight:400;color:#4d4d4d;letter-spacing:-0.228px;z-index:3;-webkit-text-stroke:0.2px #4d4d4d">Gemini Furniture, Oscar Morgan</div>
<div id="t96" class="t" style="left:743.00px;top:849.01px;font-size:19px;font-weight:400;color:#4d4d4d;letter-spacing:-0.450px;z-index:3;-webkit-text-stroke:0.2px #4d4d4d">In 2 days</div>
<div id="t97" class="t" style="left:917.00px;top:849.01px;font-size:19px;font-weight:400;color:#4d4d4d;letter-spacing:-0.580px;z-index:3;-webkit-text-stroke:0.2px #4d4d4d">S00022</div>
<div id="t98" class="t" style="left:1207.60px;top:849.01px;font-size:19px;font-weight:400;color:#4d4d4d;letter-spacing:-0.728px;z-index:3;-webkit-text-stroke:0.2px #4d4d4d">My Company (San Francisco)</div>
<div id="t99" class="t" style="left:1540.80px;top:848.26px;font-size:14.8px;font-weight:400;color:#dff7fb;letter-spacing:0.500px;z-index:4;-webkit-text-stroke:0.6px #dff7fb">Ready</div>
<div id="t100" class="t" style="left:171.00px;top:901.14px;font-size:19px;font-weight:400;color:#333333;letter-spacing:-0.273px;z-index:3;-webkit-text-stroke:0.6px #333333">WH/OUT/00005</div>
<div id="t101" class="t" style="left:377.00px;top:901.14px;font-size:19px;font-weight:400;color:#4d4d4d;letter-spacing:-0.310px;z-index:3;-webkit-text-stroke:0.2px #4d4d4d">Wood Corner</div>
<div id="t102" class="t" style="left:743.00px;top:901.14px;font-size:19px;font-weight:400;color:#4d4d4d;letter-spacing:-0.450px;z-index:3;-webkit-text-stroke:0.2px #4d4d4d">In 3 days</div>
<div id="t103" class="t" style="left:917.00px;top:901.14px;font-size:19px;font-weight:400;color:#4d4d4d;letter-spacing:0.188px;z-index:3;-webkit-text-stroke:0.2px #4d4d4d">outgoing shipment</div>
<div id="t104" class="t" style="left:1207.60px;top:901.14px;font-size:19px;font-weight:400;color:#4d4d4d;letter-spacing:-0.728px;z-index:3;-webkit-text-stroke:0.2px #4d4d4d">My Company (San Francisco)</div>
<div id="t105" class="t" style="left:1540.80px;top:900.39px;font-size:14.8px;font-weight:400;color:#dff7fb;letter-spacing:0.500px;z-index:4;-webkit-text-stroke:0.6px #dff7fb">Ready</div>
<div id="t106" class="t" style="left:171.00px;top:953.27px;font-size:19px;font-weight:400;color:#333333;letter-spacing:-0.273px;z-index:3;-webkit-text-stroke:0.6px #333333">WH/OUT/00010</div>
<div id="t107" class="t" style="left:376.00px;top:953.27px;font-size:19px;font-weight:400;color:#4d4d4d;letter-spacing:-0.228px;z-index:3;-webkit-text-stroke:0.2px #4d4d4d">Gemini Furniture, Oscar Morgan</div>
<div id="t108" class="t" style="left:743.00px;top:953.27px;font-size:19px;font-weight:400;color:#4d4d4d;letter-spacing:-0.450px;z-index:3;-webkit-text-stroke:0.2px #4d4d4d">In 3 days</div>
<div id="t109" class="t" style="left:917.00px;top:953.27px;font-size:19px;font-weight:400;color:#4d4d4d;letter-spacing:-0.580px;z-index:3;-webkit-text-stroke:0.2px #4d4d4d">S00023</div>
<div id="t110" class="t" style="left:1207.60px;top:953.27px;font-size:19px;font-weight:400;color:#4d4d4d;letter-spacing:-0.728px;z-index:3;-webkit-text-stroke:0.2px #4d4d4d">My Company (San Francisco)</div>
<div id="t111" class="t" style="left:1540.80px;top:952.52px;font-size:14.8px;font-weight:400;color:#dff7fb;letter-spacing:0.500px;z-index:4;-webkit-text-stroke:0.6px #dff7fb">Ready</div>
<div id="t112" class="t" style="left:1240.60px;top:131.26px;font-size:18px;font-weight:400;color:#525252;letter-spacing:0.680px;z-index:12;-webkit-text-stroke:0.2px #525252">Export</div>
<div id="t113" class="t" style="left:1240.60px;top:166.56px;font-size:18px;font-weight:400;color:#525252;letter-spacing:0.575px;z-index:12;-webkit-text-stroke:0.2px #525252">Duplicate</div>
<div id="t114" class="t" style="left:1240.60px;top:202.26px;font-size:18px;font-weight:400;color:#d6706f;letter-spacing:0.840px;z-index:12;-webkit-text-stroke:0.2px #d6706f">Delete</div>
<div id="t115" class="t" style="left:1211.00px;top:258.66px;font-size:18px;font-weight:400;color:#525252;letter-spacing:0.278px;z-index:12;-webkit-text-stroke:0.2px #525252">Send email</div>
<div id="t116" class="t" style="left:1212.90px;top:294.26px;font-size:18px;font-weight:400;color:#525252;letter-spacing:0.471px;z-index:12;-webkit-text-stroke:0.2px #525252">Validate</div>
<div id="t117" class="t" style="left:1211.90px;top:329.16px;font-size:18px;font-weight:400;color:#3a3a3a;letter-spacing:0.250px;z-index:12;-webkit-text-stroke:0.2px #3a3a3a">Mass Label Printing</div>
<div id="t118" class="t" style="left:1578.50px;top:7.82px;font-size:13.5px;font-weight:700;color:#d9f5df;letter-spacing:0.000px;z-index:22">11</div>
<div id="t119" class="t" style="left:1637.50px;top:8.82px;font-size:13.5px;font-weight:700;color:#d9f5df;letter-spacing:0.000px;z-index:22">4</div>
</body></html>
